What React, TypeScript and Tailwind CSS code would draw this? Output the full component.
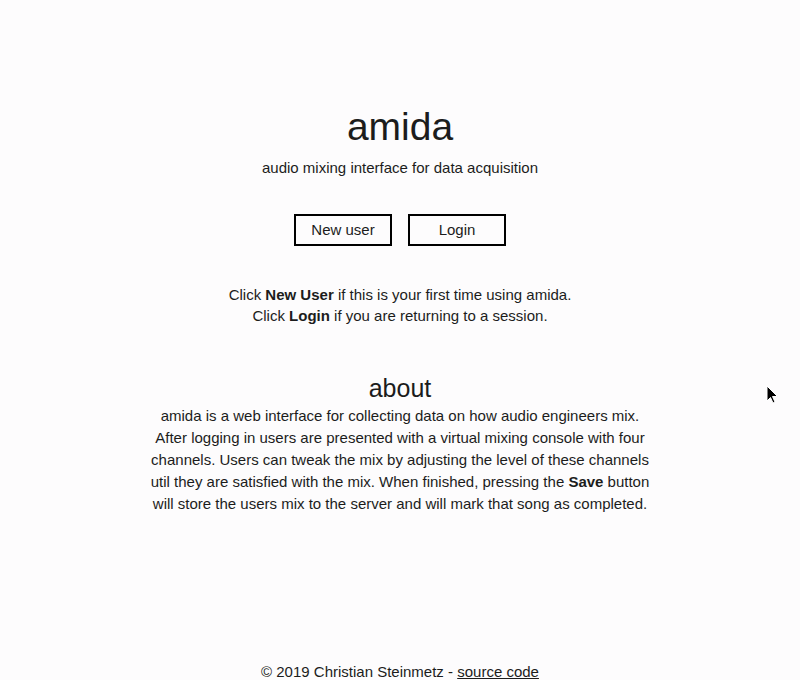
export default function App() {
  return (
    <div
      className="relative flex h-[680px] w-[800px] flex-col items-center overflow-hidden bg-[#fdfcfd] text-[#1c1c1c]"
      style={{ fontFamily: '"Liberation Sans", Arial, sans-serif' }}
    >
      {/* Header */}
      <h1 className="mt-[103px] text-[39px] leading-[48px]">amida</h1>
      <p className="mt-[7px] text-[15px] leading-[20px]">audio mixing interface for data acquisition</p>

      {/* Buttons */}
      <div className="mt-[36px] flex gap-4">
        <button className="h-[32px] w-[98px] border-2 border-black text-[15px]">New user</button>
        <button className="h-[32px] w-[98px] border-2 border-black text-[15px]">Login</button>
      </div>

      {/* Instructions */}
      <div className="mt-[38px] text-center text-[15px] leading-[21px]">
        <p>
          Click <b>New User</b> if this is your first time using amida.
        </p>
        <p>
          Click <b>Login</b> if you are returning to a session.
        </p>
      </div>

      {/* About */}
      <h2 className="mt-[47px] text-[25px] leading-[30px]">about</h2>
      <p className="mt-[2px] w-[500px] text-center text-[15px] leading-[22px]">
        amida is a web interface for collecting data on how audio engineers mix. After logging in users
        are presented with a virtual mixing console with four channels. Users can tweak the mix by
        adjusting the level of these channels util they are satisfied with the mix. When finished,
        pressing the <b>Save</b> button will store the users mix to the server and will mark that song as
        completed.
      </p>

      {/* Footer */}
      <p className="mt-auto text-[15px] leading-[16px]">
        © 2019 Christian Steinmetz - <a className="underline">source code</a>
      </p>

      {/* Mouse cursor */}
      <svg className="absolute left-[766px] top-[385px]" width="14" height="20" viewBox="0 0 14 20">
        <path d="M1 1 L1 16 L4.5 12.5 L7 18 L9 17 L6.5 11.5 L11.5 11.5 Z" fill="#000" stroke="#fff" strokeWidth="1" />
      </svg>
    </div>
  )
}
